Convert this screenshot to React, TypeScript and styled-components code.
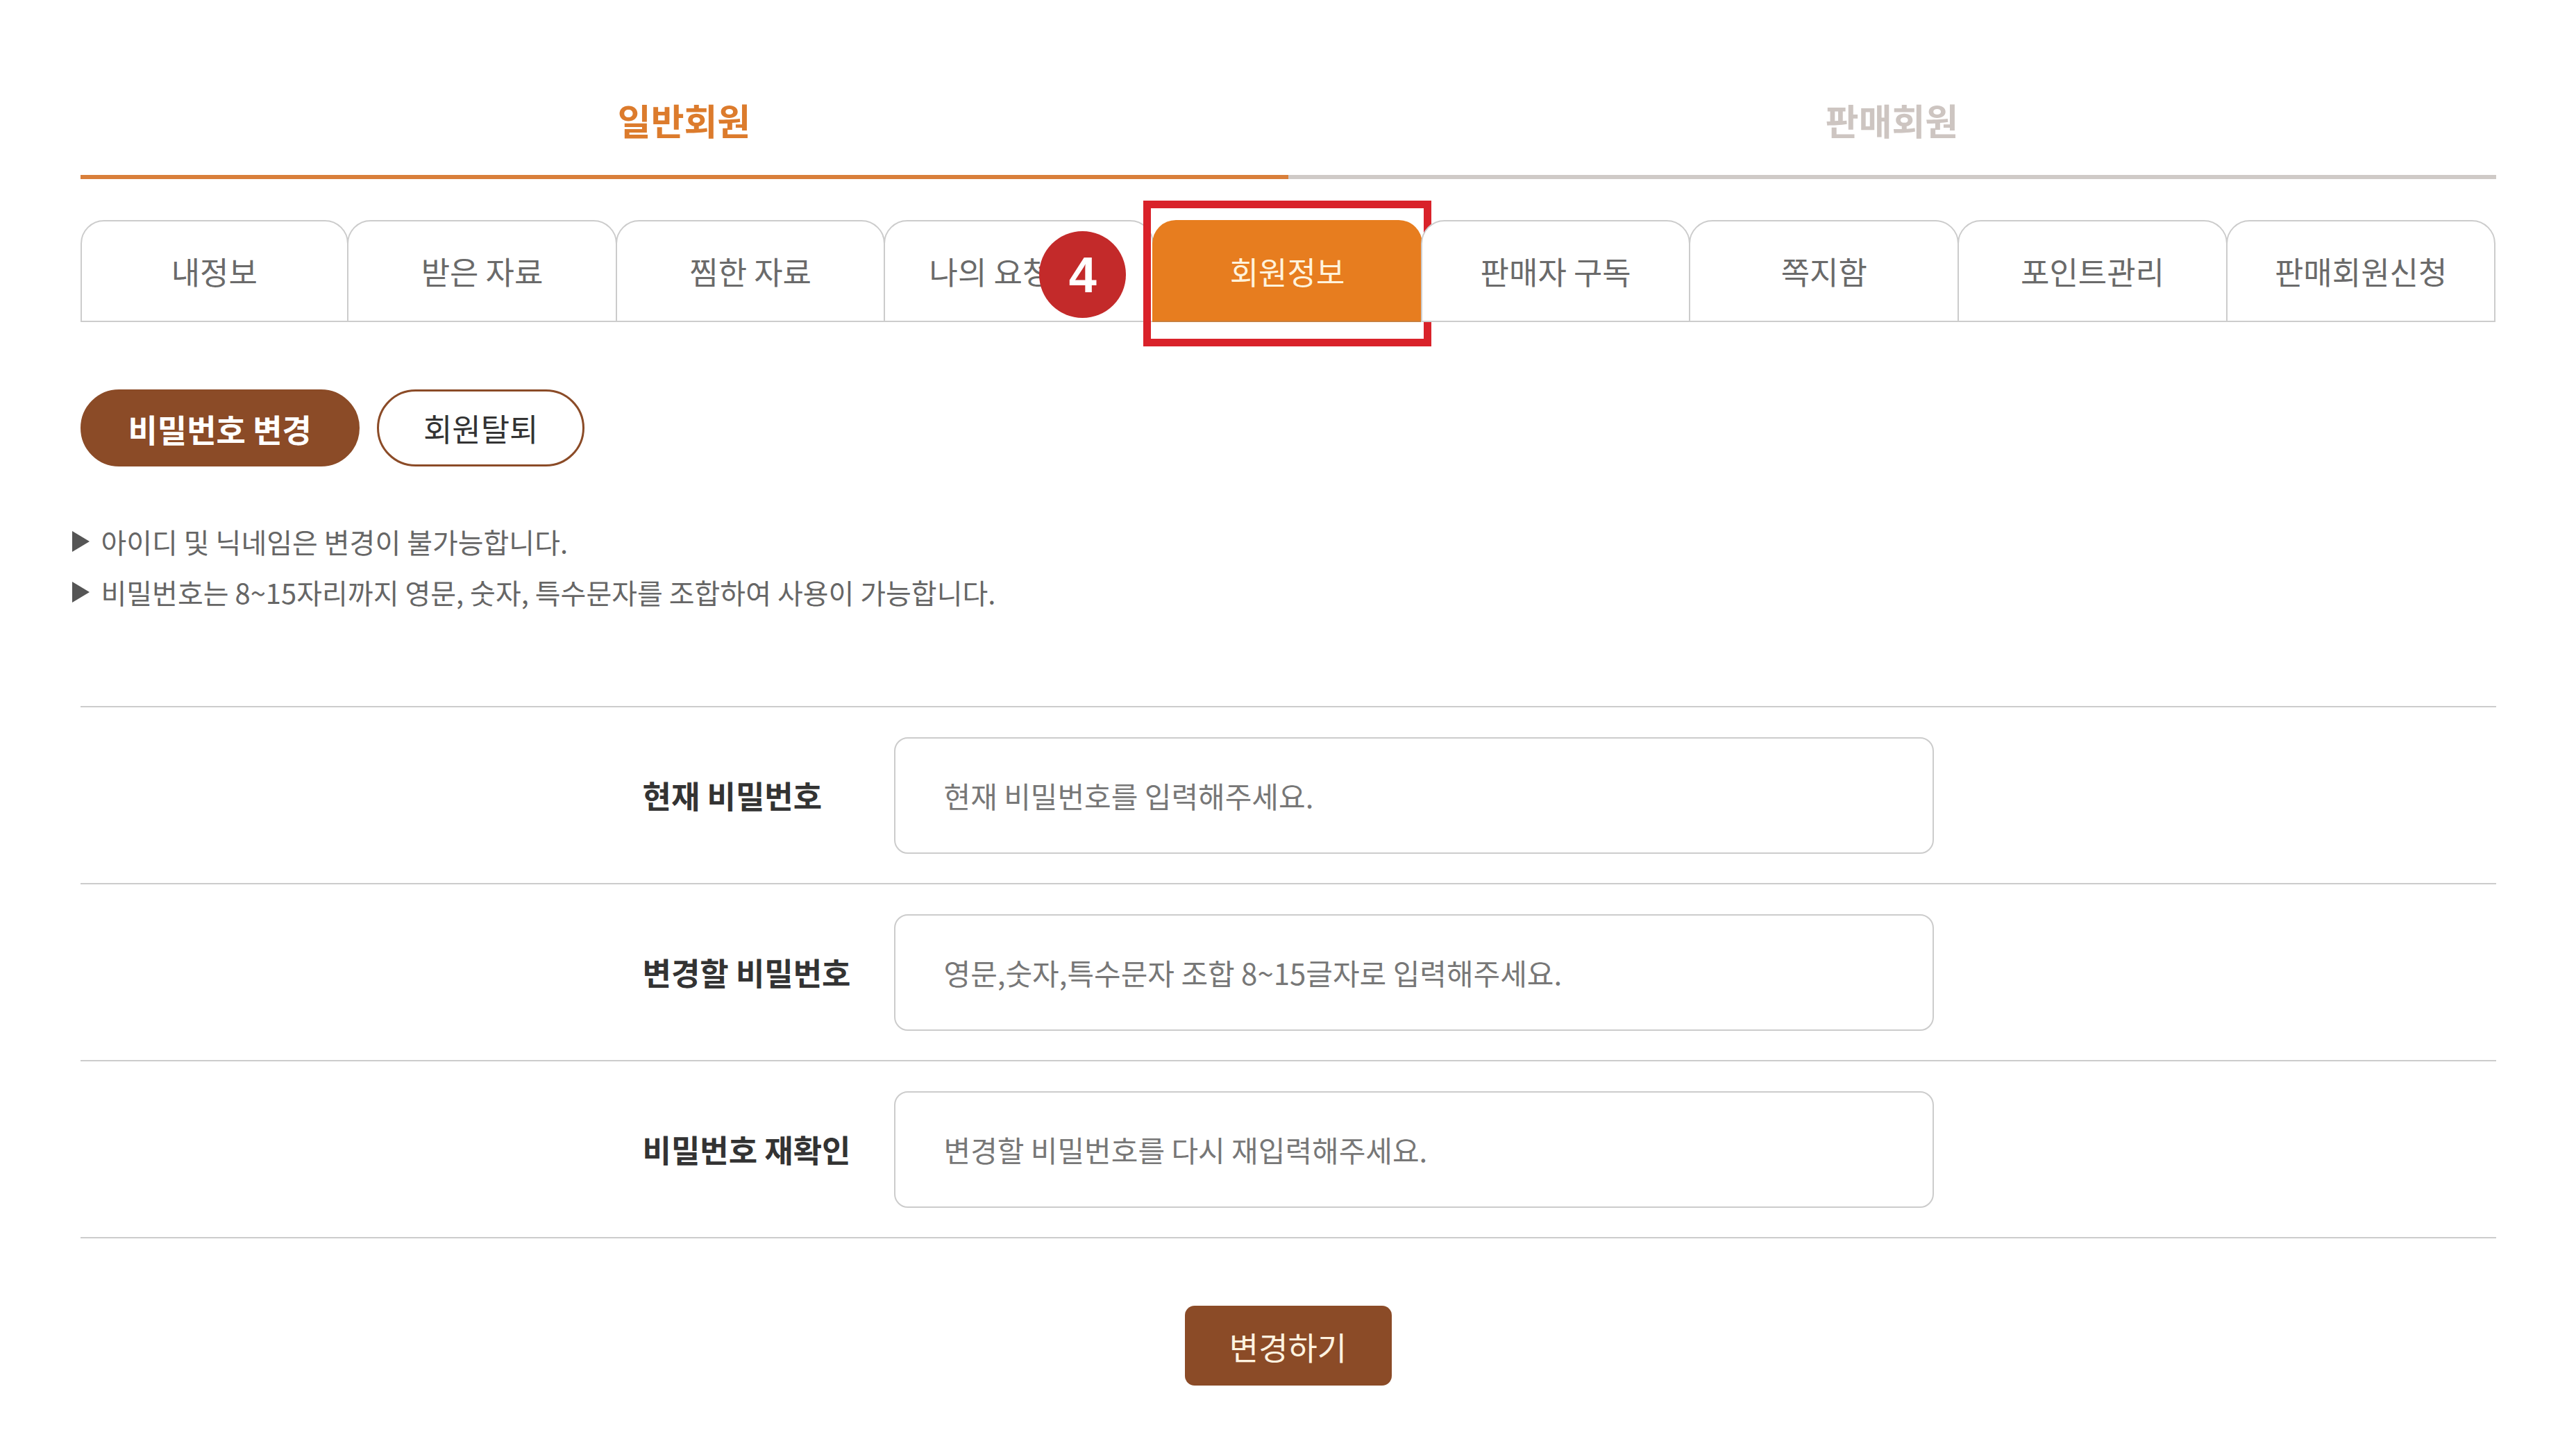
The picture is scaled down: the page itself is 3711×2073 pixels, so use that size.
import styled, { createGlobalStyle } from "styled-components";

const GlobalStyle = createGlobalStyle`
  html, body {
    margin: 0;
    padding: 0;
    background: #fff;
  }
  body {
    font-family: "Noto Sans CJK KR", "Noto Sans", sans-serif;
    color: #333;
  }
  * {
    box-sizing: border-box;
  }
`;

const Page = styled.div`
  width: 3480px;
  margin: 0 auto;
  padding: 100px 0 80px;
`;

const MemberTypes = styled.div`
  display: flex;
`;

const MemberType = styled.div<{ $active?: boolean }>`
  flex: 1;
  height: 158px;
  display: flex;
  align-items: center;
  justify-content: center;
  padding-bottom: 8px;
  font-size: 52px;
  font-weight: 700;
  color: ${(p) => (p.$active ? "#dc7b2c" : "#cdc5c1")};
  border-bottom: 6px solid ${(p) => (p.$active ? "#d97f3a" : "#cfcac7")};
  cursor: pointer;
`;

const TabBar = styled.div`
  display: grid;
  grid-template-columns: repeat(9, 1fr);
  margin-top: 59px;
`;

const Tab = styled.div<{ $active?: boolean }>`
  position: relative;
  height: 147px;
  display: flex;
  align-items: center;
  justify-content: center;
  font-size: 45px;
  white-space: nowrap;
  color: ${(p) => (p.$active ? "#fff3dc" : "#6a6a6a")};
  background: ${(p) => (p.$active ? "#e77d1f" : "#fff")};
  border: 2px solid ${(p) => (p.$active ? "#e77d1f" : "#cccccc")};
  border-bottom-color: ${(p) => (p.$active ? "#c9803f" : "#cccccc")};
  border-radius: 34px 34px 0 0;
  margin-left: -2px;
  cursor: pointer;

  &:first-child {
    margin-left: 0;
  }
`;

// red step marker drawn over the active tab
const Highlight = styled.span`
  position: absolute;
  top: -30px;
  left: -15px;
  right: -15px;
  bottom: -37px;
  border: 11px solid #d9222a;
  pointer-events: none;
`;

const StepBadge = styled.span`
  position: absolute;
  top: 14px;
  left: -165px;
  width: 125px;
  height: 125px;
  border-radius: 50%;
  background: #c32a2a;
  color: #fff;
  display: flex;
  align-items: center;
  justify-content: center;
  font-family: "Liberation Sans", Arial, sans-serif;
  font-weight: 700;
  font-size: 72px;
  z-index: 2;
`;

const SubMenu = styled.div`
  display: flex;
  gap: 25px;
  margin-top: 97px;
`;

const PillButton = styled.button<{ $filled?: boolean }>`
  height: 111px;
  padding: 0 ${(p) => (p.$filled ? "66px" : "64px")};
  border-radius: 56px;
  border: 3px solid #8b4b27;
  background: ${(p) => (p.$filled ? "#8b4b27" : "#fff")};
  color: ${(p) => (p.$filled ? "#fff" : "#333")};
  font-family: inherit;
  font-size: ${(p) => (p.$filled ? "46px" : "45px")};
  font-weight: ${(p) => (p.$filled ? 700 : 400)};
  cursor: pointer;
`;

const Notes = styled.ul`
  list-style: none;
  margin: 71px 0 0 -12px;
  padding: 0;
`;

const Note = styled.li`
  display: flex;
  align-items: center;
  height: 73px;
  font-size: 40px;
  color: #666;

  &::before {
    content: "";
    width: 0;
    height: 0;
    border-top: 15px solid transparent;
    border-bottom: 15px solid transparent;
    border-left: 25px solid #555;
    margin-right: 17px;
  }
`;

const Form = styled.div`
  margin-top: 128px;
  border-top: 2px solid #cccccc;
`;

const FieldRow = styled.div`
  height: 255px;
  border-bottom: 2px solid #cccccc;
  display: flex;
  align-items: center;
  justify-content: center;
`;

const FieldLabel = styled.label`
  width: 362px;
  font-size: 45px;
  font-weight: 700;
  color: #333;
`;

const FieldInput = styled.input`
  width: 1498px;
  height: 168px;
  padding: 0 70px;
  border: 2px solid #cccccc;
  border-radius: 20px;
  font-family: inherit;
  font-size: 42px;
  color: #333;
  outline: none;

  &::placeholder {
    color: #777;
  }
`;

const Actions = styled.div`
  display: flex;
  justify-content: center;
  margin-top: 97px;
`;

const SubmitButton = styled.button`
  width: 298px;
  height: 115px;
  border: none;
  border-radius: 14px;
  background: #8b4b27;
  color: #fff3e0;
  font-family: inherit;
  font-size: 46px;
  cursor: pointer;
`;

const tabs = ["내정보", "받은 자료", "찜한 자료", "나의 요청자료", "회원정보", "판매자 구독", "쪽지함", "포인트관리", "판매회원신청"];

const fields = [
  { label: "현재 비밀번호", placeholder: "현재 비밀번호를 입력해주세요." },
  { label: "변경할 비밀번호", placeholder: "영문,숫자,특수문자 조합 8~15글자로 입력해주세요." },
  { label: "비밀번호 재확인", placeholder: "변경할 비밀번호를 다시 재입력해주세요." },
];

export default function App() {
  return (
    <>
      <GlobalStyle />
      <Page>
        <MemberTypes>
          <MemberType $active>일반회원</MemberType>
          <MemberType>판매회원</MemberType>
        </MemberTypes>

        <TabBar>
          {tabs.map((t) => (
            <Tab key={t} $active={t === "회원정보"}>
              {t}
              {t === "회원정보" && (
                <>
                  <StepBadge>4</StepBadge>
                  <Highlight />
                </>
              )}
            </Tab>
          ))}
        </TabBar>

        <SubMenu>
          <PillButton $filled>비밀번호 변경</PillButton>
          <PillButton>회원탈퇴</PillButton>
        </SubMenu>

        <Notes>
          <Note>아이디 및 닉네임은 변경이 불가능합니다.</Note>
          <Note>비밀번호는 8~15자리까지 영문, 숫자, 특수문자를 조합하여 사용이 가능합니다.</Note>
        </Notes>

        <Form>
          {fields.map((f) => (
            <FieldRow key={f.label}>
              <FieldLabel>{f.label}</FieldLabel>
              <FieldInput type="password" placeholder={f.placeholder} />
            </FieldRow>
          ))}
        </Form>

        <Actions>
          <SubmitButton>변경하기</SubmitButton>
        </Actions>
      </Page>
    </>
  );
}
